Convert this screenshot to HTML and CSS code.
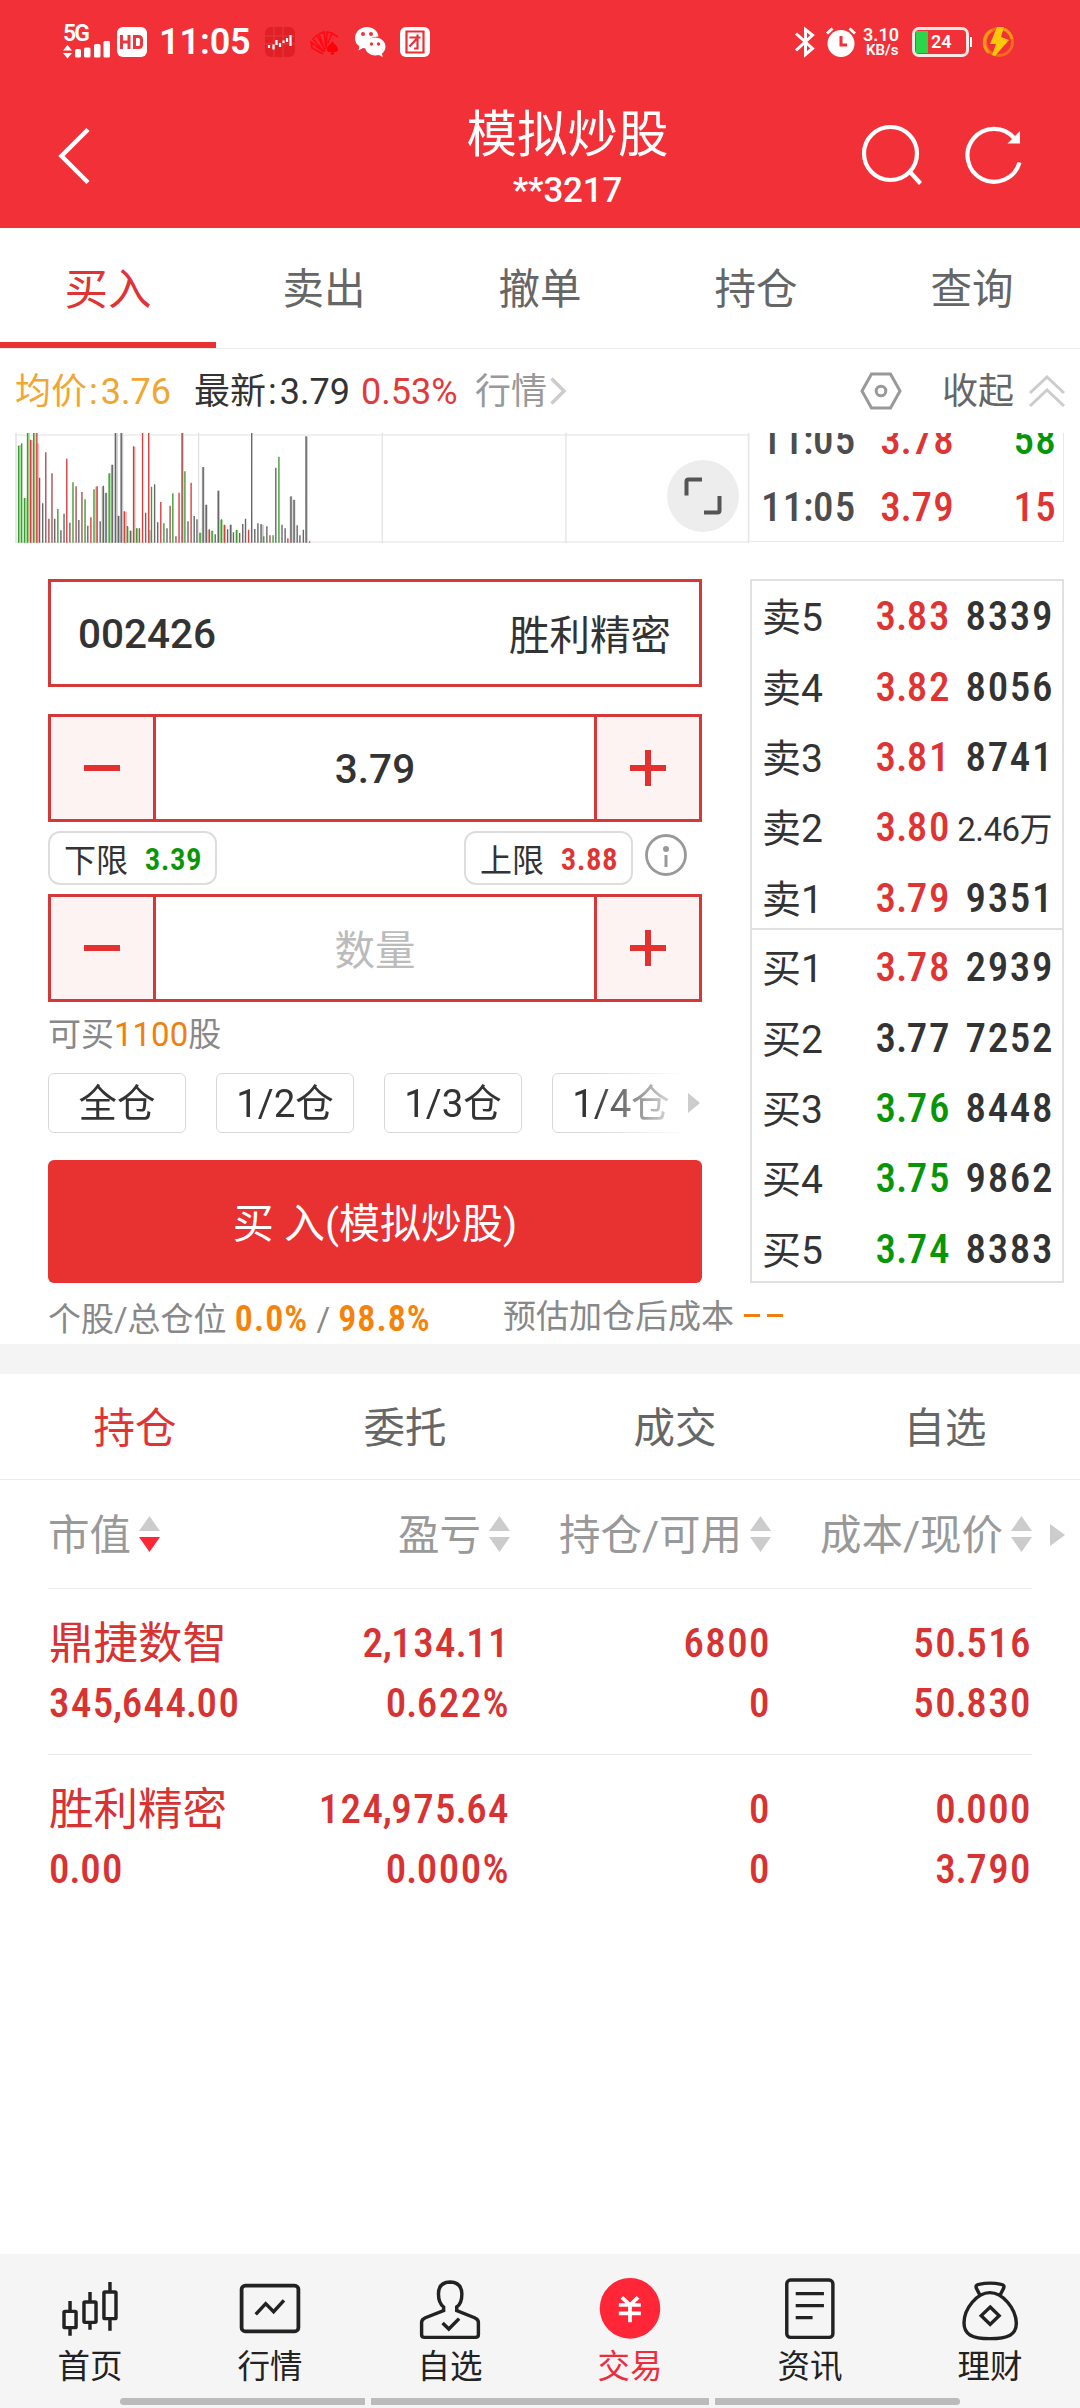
FILE: index.html
```html
<!DOCTYPE html>
<html lang="zh-CN">
<head>
<meta charset="utf-8">
<title>模拟炒股</title>
<link rel="stylesheet" href="styles.css">
</head>
<body>
<header class="header">
  <div class="status">
    <div class="signal">
      <span class="net">5G</span>
      <svg width="48" height="15" viewBox="0 0 48 15" fill="#fff"><path d="M0 6.500L4.500 1L9 6.500zM0 9L4.500 14.500L9 9z"/><rect x="12" y="5" width="6" height="8.500" rx="1.500"/><rect x="21" y="3.500" width="6.500" height="10" rx="1.500"/><rect x="31" y="0" width="6.500" height="13.500" rx="1.500"/><rect x="40.500" y="-3" width="6.500" height="16.500" rx="1.500"/></svg>
    </div>
    <svg class="hd" width="30" height="30" viewBox="0 0 30 30"><rect width="30" height="30" rx="6" fill="#fff"/><path d="M4.500 8v14M12 8v14M4.500 15h7.500M17.500 9.500v11h4q3 0 3-3v-5q0-3-3-3z" fill="none" stroke="#e83840" stroke-width="3"/></svg>
    <span class="clock">11:05</span>
    <svg class="ic-app" width="30" height="30" viewBox="0 0 30 30"><rect width="30" height="30" rx="6" fill="#df2027"/><path d="M0 9h30M0 17h30M9 0v30M18 0v30" stroke="#e8383c"/><path d="M4 18v3M8.500 17.500v5M11.500 13v5M15 16v4M18.500 13.500v2.500M22 11v4M25.500 8v11" stroke="#fff" stroke-width="2.200"/></svg>
    <svg class="ic-fan" width="30" height="30" viewBox="0 0 30 30"><g fill="none" stroke="#ff0a14" stroke-width="1.600"><path d="M13 27L2 21L1 15L14 25L3 12L7 8L15 24L9 7L14 5L16 22L17 5L22 6L18 16M22 6L28 10"/></g><path d="M22.500 14c2 4 6 5 5.500 9c-1 3-4 2-4.500 1.500l1 3h-4l1-3c-1 1-4 1-4.500-1.500c-.5-4 3.500-5 5.500-9z" fill="#ff0008"/></svg>
    <svg class="ic-chat" width="31" height="30" viewBox="0 0 31 30"><path d="M12 0c6 0 11 4 11.500 9.500C16 9.500 10 14 10.500 21.500L8 21l-4.500 2.500l1-4C1.500 17.500 0 14.500 0 11.500C0 5 5 0 12 0z" fill="#fff"/><path d="M20 10.500c6 0 10.500 4 10.500 9c0 3-1.500 5.500-3.500 7l.7 3.500l-3.700-2c-8 2-14-3-14-8.500c0-5 4-9 10-9z" fill="#fff"/><g fill="#f23038"><circle cx="8" cy="7" r="2"/><circle cx="16" cy="7" r="2"/><circle cx="16.500" cy="17" r="1.700"/><circle cx="23.500" cy="17" r="1.700"/></g></svg>
    <svg class="ic-tuan" width="30" height="30" viewBox="0 0 30 30"><rect width="30" height="30" rx="6" fill="#fff"/><path d="M6.500 4.500h17v21h-17zM9.500 10.500h11M17.500 7.500v14h-3.500M16.500 12L9.500 19.500" fill="none" stroke="#e83038" stroke-width="2.200"/></svg>
    <span class="spring"></span>
    <svg class="ic-bt" width="20" height="30" viewBox="0 0 20 30" fill="none" stroke="#fff" stroke-width="3"><path d="M1 6.500L17.500 21.500L10.500 27.500V2.500L17.500 8L1 23.500"/></svg>
    <svg class="ic-alarm" width="30" height="30" viewBox="0 0 30 30"><circle cx="15" cy="16.500" r="13.500" fill="#fff"/><path d="M1 6.500L6.500 1.500M29 6.500L23.500 1.500" stroke="#fff" stroke-width="3"/><path d="M15 9v9h6" fill="none" stroke="#f23038" stroke-width="3"/></svg>
    <div class="speed"><span>3.10</span><span class="unit">KB/s</span></div>
    <div class="battery"><i></i><span>24</span></div>
    <svg class="ic-bolt" width="30" height="30" viewBox="0 0 30 30"><circle cx="15" cy="15" r="13.500" fill="none" stroke="#f46a20" stroke-width="3"/><path d="M5 26A14 14 0 0 1 8 3M20 2A14 14 0 0 1 28 12" stroke="#fb9a12" stroke-width="3" fill="none"/><path d="M13 0h7l-3 10l8 3L11 29L8 28l4-11H6z" fill="#ffc60a"/></svg>
  </div>
  <div class="titlebar">
    <svg class="back" width="34" height="60" viewBox="0 0 34 60" fill="none" stroke="#fff" stroke-width="4.500"><path d="M31 3.500L4.500 30L31 56.500"/></svg>
    <div class="title"><h1>模拟炒股</h1><span>**3217</span></div>
    <div class="actions">
      <svg width="62" height="62" viewBox="0 0 62 62" fill="none" stroke="#fff" stroke-width="4.200"><circle cx="28.500" cy="28.500" r="26.500"/><path d="M48.500 47.500L58.500 58.500"/></svg>
      <svg width="60" height="60" viewBox="0 0 60 60"><path d="M48.500 12.500A26.500 26.500 0 1 0 53.500 36.500" fill="none" stroke="#fff" stroke-width="4.200"/><path d="M54 5v12.500H41.500z" fill="#fff"/></svg>
    </div>
  </div>
</header>

<nav class="tabs">
  <a class="on">买入</a><a>卖出</a><a>撤单</a><a>持仓</a><a>查询</a>
</nav>

<section class="quote">
  <span class="avg">均价<em>:</em>3.76</span>
  <span class="last">最新<em>:</em>3.79</span>
  <span class="pct">0.53%</span>
  <span class="more">行情</span>
  <svg width="16" height="28" viewBox="0 0 16 28" fill="none" stroke="#ccc" stroke-width="3.500"><path d="M1.500 1.500L14 14L1.500 26.500"/></svg>
  <span class="spring"></span>
  <svg class="hex" width="42" height="38" viewBox="0 0 42 38" fill="none" stroke="#999" stroke-width="3"><path d="M11.500 2h19L40 19L30.500 36h-19L2 19z"/><circle cx="21" cy="19" r="4.800"/></svg>
  <span class="fold">收起</span>
  <svg width="36" height="34" viewBox="0 0 36 34" fill="none" stroke="#ccc" stroke-width="3"><path d="M1 19L18 3L35 19M1 32L18 16L35 32"/></svg>
</section>

<section class="market">
  <div class="chart">
    <svg width="735" height="110" viewBox="43.6 609 2134.400 330" preserveAspectRatio="none" fill="none">
      <path d="M45 615H2172M45 936H2172" stroke="#ebebeb" stroke-width="5"/>
      <path d="M46.500 609V939M2174 609V939" stroke="#e6e6e6" stroke-width="5"/>
      <path d="M577 609V939M1110 609V939M1643.500 609V939" stroke="#dcdcdc" stroke-width="3"/>
      <path d="M57 645V938M74 805V938M83 609V938M100 609V938M320 730V938M370 890V938M398 895V938M582 908V938M616 902V938M643 870V938M688 900V938" stroke="#a9e6a0" stroke-width="8"/>
      <path d="M91 630V938M110 640V938M280 770V938M365 845V938M390 650V938M530 609V938M606 900V938M652 886V938" stroke="#f3bcb8" stroke-width="8"/>
      <path d="M299 770V938M308 790V938M326 705V938M338 609V938M345 858V938M354 609V938M380 902V938M436 900V938M590 712V938M599 824V938M635 782V938M670 884V938M762 884V938M845 800V938M854 810V938M890 620V938" stroke="#c9c9c9" stroke-width="8"/>
      <path d="M54 648V938M63 640V938M71 804V938M80 609V938M98 609V938M168 837V938M212 757V938M247 808V938M273 778V938M317 730V938M370 888V938M397 895V938M440 770V938M476 880V938M502 790V938M537 724V938M581 908V938M616 902V938M643 868V938M687 900V938M766 919V938M793 916V938M810 680V938" stroke="#3f9a34" stroke-width="4"/>
      <path d="M89 629V938M107 609V938M194 686V938M264 862V938M282 769V938M361 844V938M414 609V938M432 609V938M467 816V938M520 788V938M555 758V938M608 898V938M652 884V938M722 899V938M836 925V938M899 934V938" stroke="#dc3c3c" stroke-width="4"/>
      <path d="M133 667V938M142 866V938M151 730V938M203 878V938M221 769V938M238 786V938M388 649V938M405 895V938M423 848V938M494 827V938M511 919V938M529 609V938M696 909V938M784 916V938" stroke="#a85050" stroke-width="4"/>
      <path d="M115 743V938M124 820V938M159 866V938M177 901V938M186 851V938M229 870V938M255 887V938M291 874V938M300 767V938M308 788V938M326 704V938M335 609V938M344 857V938M352 609V938M379 902V938M449 763V938M458 877V938M485 895V938M546 874V938M564 858V938M572 868V938M590 711V938M599 824V938M625 913V938M634 782V938M661 898V938M670 884V938M678 907V938M705 882V938M713 866V938M731 609V938M740 897V938M749 880V938M758 882V938M775 889V938M801 713V938M819 884V938M828 895V938M845 799V938M854 809V938M863 886V938M871 916V938M881 899V938M889 619V938" stroke="#666" stroke-width="4"/>
    </svg>
    <span class="expand"><svg width="38" height="38" viewBox="0 0 38 38" fill="none" stroke="#555" stroke-width="4"><path d="M2.500 18.500V4.500q0-2 2-2H18M35.500 19V33.500q0 2-2 2H20"/></svg></span>
  </div>
  <div class="ticks">
    <div class="tick"><span>11<i>:</i>05</span><b class="up">3<i>.</i>78</b><b class="down">58</b></div>
    <div class="tick"><span>11<i>:</i>05</span><b class="up">3<i>.</i>79</b><b class="up">15</b></div>
  </div>
</section>

<section class="trade">
  <div class="form">
    <div class="field code"><b>002426</b><span>胜利精密</span></div>
    <div class="field step price"><i class="minus"></i><b>3.79</b><i class="plus"></i></div>
    <div class="limits">
      <span class="tag">下限<b class="down">3.39</b></span>
      <span class="tag">上限<b class="up">3.88</b></span>
      <svg width="42" height="42" viewBox="0 0 42 42"><circle cx="21" cy="21" r="19.500" fill="none" stroke="#999" stroke-width="2.800"/><circle cx="21" cy="15" r="3" fill="#999"/><path d="M21 21v12" stroke="#999" stroke-width="3"/></svg>
    </div>
    <div class="field step"><i class="minus"></i><span class="hint">数量</span><i class="plus"></i></div>
    <div class="avail">可买<em>1100</em>股</div>
    <div class="chips">
      <div class="chiprow"><span>全仓</span><span>1/2仓</span><span>1/3仓</span><span>1/4仓</span></div>
      <svg width="12" height="20" viewBox="0 0 12 20"><path d="M0 0L12 10L0 20z" fill="#ccc"/></svg>
    </div>
    <button class="buy">买 入(模拟炒股)</button>
  </div>
  <div class="book">
    <div class="sell">
      <div class="lv"><span>卖5</span><b class="up">3<i>.</i>83</b><b>8339</b></div>
      <div class="lv"><span>卖4</span><b class="up">3<i>.</i>82</b><b>8056</b></div>
      <div class="lv"><span>卖3</span><b class="up">3<i>.</i>81</b><b>8741</b></div>
      <div class="lv"><span>卖2</span><b class="up">3<i>.</i>80</b><b class="wan">2.46万</b></div>
      <div class="lv"><span>卖1</span><b class="up">3<i>.</i>79</b><b>9351</b></div>
    </div>
    <div class="bid">
      <div class="lv"><span>买1</span><b class="up">3<i>.</i>78</b><b>2939</b></div>
      <div class="lv"><span>买2</span><b>3<i>.</i>77</b><b>7252</b></div>
      <div class="lv"><span>买3</span><b class="down">3<i>.</i>76</b><b>8448</b></div>
      <div class="lv"><span>买4</span><b class="down">3<i>.</i>75</b><b>9862</b></div>
      <div class="lv"><span>买5</span><b class="down">3<i>.</i>74</b><b>8383</b></div>
    </div>
  </div>
</section>
<div class="ratio">
  <span class="pos">个股/总仓位 <b>0.0%</b> / <b>98.8%</b></span>
  <span class="cost">预估加仓后成本</span><i></i><i></i>
</div>

<nav class="subtabs"><a class="on">持仓</a><a>委托</a><a>成交</a><a>自选</a></nav>

<section class="holdings">
  <div class="thead">
    <span class="c1">市值<svg width="21" height="36" viewBox="0 0 21 36"><path d="M0 15L10.500 0L21 15z" fill="#ccc"/><path d="M0 21L10.500 36L21 21z" fill="#ff2638"/></svg></span>
    <span class="c2">盈亏<svg width="21" height="36" viewBox="0 0 21 36" fill="#ccc"><path d="M0 15L10.500 0L21 15zM0 21L10.500 36L21 21z"/></svg></span>
    <span class="c3">持仓/可用<svg width="21" height="36" viewBox="0 0 21 36" fill="#ccc"><path d="M0 15L10.500 0L21 15zM0 21L10.500 36L21 21z"/></svg></span>
    <span class="c4">成本/现价<svg width="21" height="36" viewBox="0 0 21 36" fill="#ccc"><path d="M0 15L10.500 0L21 15zM0 21L10.500 36L21 21z"/></svg></span>
    <svg class="next" width="15" height="22" viewBox="0 0 15 22"><path d="M0 0L15 11L0 22z" fill="#ccc"/></svg>
  </div>
  <div class="stock">
    <span class="name">鼎捷数智</span><b>2<i>,</i>134<i>.</i>11</b><b>6800</b><b>50<i>.</i>516</b>
    <b>345<i>,</i>644<i>.</i>00</b><b>0<i>.</i>622%</b><b>0</b><b>50<i>.</i>830</b>
  </div>
  <div class="stock">
    <span class="name">胜利精密</span><b>124<i>,</i>975<i>.</i>64</b><b>0</b><b>0<i>.</i>000</b>
    <b>0<i>.</i>00</b><b>0<i>.</i>000%</b><b>0</b><b>3<i>.</i>790</b>
  </div>
</section>

<footer class="dock">
  <div class="items">
    <a><svg width="180" height="70" viewBox="0 100 523 210" preserveAspectRatio="none" fill="none" stroke="#222" stroke-width="10"><rect x="186" y="215" width="35" height="49" rx="3"/><rect x="244" y="187" width="35" height="61" rx="3"/><rect x="302" y="157" width="35" height="80" rx="3"/><path d="M203.500 184v28M203.500 268v20M261.500 157v28M261.500 250v20M319.500 127v28M319.500 240v33"/></svg>首页</a>
    <a><svg width="180" height="70" viewBox="0 100 523 210" preserveAspectRatio="none" fill="none" stroke="#222" stroke-width="11"><rect x="179" y="138" width="165" height="137" rx="11"/><path d="M220 224L249 192L272 216L302 182" stroke-width="10"/></svg>行情</a>
    <a><svg width="180" height="70" viewBox="1045 100 523 210" preserveAspectRatio="none" fill="none" stroke="#222" stroke-width="10"><path d="M1288 202V213L1235 234Q1224 239 1224 248V285Q1224 293 1233 293H1380Q1389 293 1389 285V248Q1389 239 1378 234L1326 213V202Q1341 192 1341 163Q1340 128 1307 127Q1273 128 1273 163Q1273 190 1288 202zM1285 250L1303 268L1333 237"/></svg>自选</a>
    <a class="on"><svg width="180" height="70" viewBox="0 100 523 210" preserveAspectRatio="none"><ellipse cx="261.500" cy="206" rx="88" ry="91" fill="#ff2638"/><path d="M238 173L261.500 196L285 173M229 196H293M229 221H293M261.500 196V248" fill="none" stroke="#fff" stroke-width="11"/></svg>交易</a>
    <a><svg width="180" height="70" viewBox="523 100 523 210" preserveAspectRatio="none" fill="none" stroke="#222" stroke-width="10"><rect x="717" y="121" width="134" height="172" rx="11"/><path d="M743 162H825M743 198H825M743 234H792"/></svg>资讯</a>
    <a><svg width="180" height="70" viewBox="1045 100 523 210" preserveAspectRatio="none" fill="none" stroke="#222" stroke-width="10"><path d="M1277 166L1267 146Q1263 136 1274 134Q1307 127 1339 134Q1350 136 1346 146L1336 166M1306 159C1270 159 1231 205 1231 250C1231 285 1255 297 1306 297C1360 297 1383 285 1383 250C1381 205 1343 159 1306 159zM1307 202L1333 228L1307 254L1281 228z"/></svg>理财</a>
  </div>
  <div class="handles"><i></i><i></i><i></i></div>
</footer>
</body>
</html>
```
FILE: styles.css
```css
* { box-sizing: border-box; }
body {
  margin: 0;
  width: 1080px;
  height: 2408px;
  display: flex;
  flex-direction: column;
  background: #fff;
  color: #333;
  font-family: Roboto, "Noto Sans CJK SC", sans-serif;
  font-weight: 400;
  overflow: hidden;
}
i, em { font-style: normal; }
svg { display: block; flex: none; overflow: visible; }
b { font-weight: 500; }
.spring { flex: 1; }
.up { color: #df3434; }
.down { color: #079607; }

/* header */
.header { height: 228px; background: #f23038; color: #fff; }
.status { height: 84px; display: flex; align-items: center; padding: 0 66px 0 63px; font-weight: 500; }
.signal { width: 48px; height: 34px; display: flex; flex-direction: column; justify-content: space-between; }
.net { font-size: 23px; line-height: 18px; font-weight: 600; letter-spacing: -2px; }
.hd { margin-left: 6px; }
.clock { width: 103px; padding-left: 12px; font-size: 36px; line-height: 42px; font-weight: 600; letter-spacing: -.1px; white-space: nowrap; }
.ic-app { margin-left: 15px; }
.ic-fan { margin-left: 15px; }
.ic-chat { margin-left: 15px; }
.ic-tuan { margin-left: 14px; }
.ic-alarm { margin-left: 11px; }
.speed { width: 37px; margin-left: 7px; display: flex; flex-direction: column; font-size: 18px; line-height: 15px; font-weight: 600; }
.speed .unit { font-size: 15px; padding-left: 3px; margin-top: 1px; }
.battery { position: relative; width: 57px; height: 30px; margin-left: 12px; border: 3px solid #fde8e8; border-radius: 7px; font-size: 18px; line-height: 24px; font-weight: 600; }
.battery i { position: absolute; left: 1px; top: 1px; width: 12px; height: 22px; background: #2bd74a; }
.battery span { position: absolute; left: 16px; }
.battery::after { content: ""; position: absolute; right: -6px; top: 7px; width: 2px; height: 10px; background: #fff; }
.ic-bolt { margin-left: 15px; }
.titlebar { height: 144px; display: grid; grid-template-columns: 281px 573px 226px; align-items: center; }
.back { margin-left: 57px; }
.title { display: flex; flex-direction: column; align-items: center; }
.title h1 { margin: 4px 0 0; font-size: 50.500px; line-height: 60px; font-weight: 400; }
.title span { font-size: 35px; line-height: 40px; font-weight: 500; margin-top: 6px; letter-spacing: -.2px; }
.actions { display: flex; gap: 42px; padding-left: 8px; align-items: center; }

/* tabs */
.tabs { height: 121px; display: flex; border-bottom: 1px solid #ebebeb; }
.tabs a { width: 216px; display: flex; align-items: center; justify-content: center; font-size: 41.500px; color: #666; padding-bottom: 4px; }
.tabs .on { font-size: 43.500px; color: #e03434; border-bottom: 6px solid #e83131; padding: 3px 0 0; }

/* quote line */
.quote { height: 84px; display: flex; align-items: center; padding: 0 15px; font-size: 36px; line-height: 42px; white-space: nowrap; }
.quote span { padding-top: 1px; }
.quote em { margin: 0 3px 0 2px; }
.avg { width: 179px; color: #f0a630; }
.last { width: 167px; }
.pct { width: 114px; color: #e03a3a; }
.more { width: 75px; color: #999; }
.fold { color: #666; margin: 0 15px 0 40px; }

/* volume chart and ticks */
.market { height: 110px; display: flex; padding-left: 15px; }
.chart { position: relative; width: 735px; }
.expand { position: absolute; right: 11px; top: 27px; width: 72px; height: 72px; border-radius: 50%; background: #ededed; display: flex; align-items: center; justify-content: center; }
.ticks { width: 314px; height: 109px; border: solid #e8e8e8; border-width: 0 1px 1px 0; overflow: hidden; display: flex; flex-direction: column; justify-content: flex-end; }
.tick { flex: none; height: 67px; padding: 0 6px 1px 11px; display: grid; grid-template-columns: 93px 101px 1fr; align-items: center; font-size: 41px; font-weight: 500; font-stretch: 75%; letter-spacing: 1.300px; text-align: right; }
.tick span { color: #4d4d4d; text-align: left; }

/* punctuation inside figures is set tighter than the digits */
.tick i, .lv i, .stock i { letter-spacing: -.6px; margin-left: -1.600px; }

/* order form */
.trade { height: 740px; padding: 36px 16px 0 48px; display: flex; justify-content: space-between; }
.form { width: 654px; }
.field { height: 108px; border: 3px solid #d63838; display: flex; align-items: center; justify-content: space-between; font-size: 40.500px; }
.field b { padding-top: 2px; }
.field span { padding-bottom: 2px; }
.code { padding: 0 28px 0 27px; }
.price { margin-top: 27px; }
.minus, .plus { width: 105px; height: 102px; background: linear-gradient(#e53030, #e53030) center / 36px 6px no-repeat #fef3f3; }
.minus { border-right: 3px solid #d63838; }
.plus { border-left: 3px solid #d63838; background: linear-gradient(#e53030, #e53030) center / 36px 6px no-repeat, linear-gradient(#e53030, #e53030) center / 6px 36px no-repeat, #fef3f3; }
.hint { color: #bbb; }
.limits { height: 72px; display: flex; align-items: center; padding-right: 15px; }
.limits svg { margin-top: -6px; }
.tag { width: 169px; height: 54px; border: 2px solid #ddd; border-radius: 12px; display: flex; align-items: center; justify-content: space-between; padding: 0 13px 0 14px; font-size: 32px; }
.tag b { font-size: 31px; font-weight: 600; font-stretch: 75%; letter-spacing: .4px; padding-top: 2px; }
.tag + .tag { margin: 0 12px 0 247px; }
.avail { height: 71px; line-height: 66px; font-size: 33px; color: #888; }
.avail em { color: #ef800f; }
.chips { display: flex; align-items: center; height: 60px; }
.chiprow { width: 640px; display: flex; gap: 30px; overflow: hidden; -webkit-mask: linear-gradient(90deg, #000 545px, transparent 640px); mask: linear-gradient(90deg, #000 545px, transparent 640px); }
.chiprow span { flex: none; width: 138px; height: 60px; border: 1px solid #d8d8d8; border-radius: 6px; font-size: 38.500px; line-height: 60px; text-align: center; }
.buy { display: block; width: 654px; height: 123px; margin-top: 27px; padding: 0 0 4px; border: 0; border-radius: 6px; background: #e83131; color: #fff; font: inherit; font-size: 41px; }

/* five-level book */
.book { width: 314px; height: 704px; border: 2px solid #e0e0e0; font-size: 41px; }
.sell { height: 349px; border-bottom: 2px solid #e0e0e0; }
.bid { padding-top: 2px; }
.lv { height: 70.400px; display: grid; grid-template-columns: 82px 104px 1fr; align-items: center; padding: 0 8px 0 13px; text-align: right; font-stretch: 75%; letter-spacing: 1.600px; }
.lv span { text-align: left; font-size: 39px; font-weight: 400; font-stretch: 100%; letter-spacing: 0; padding-bottom: 4px; margin-left: -3px; }
.lv .wan { font-size: 33px; font-weight: 400; font-stretch: 100%; letter-spacing: -.5px; white-space: nowrap; margin: 0 2px 0 -12px; }

.ratio { flex: none; margin-top: -36px; height: 97px; padding: 48px 0 0 48px; display: flex; align-items: center; font-size: 33px; line-height: 40px; color: #888; white-space: nowrap; }
.ratio b { color: #f5820a; font-size: 36px; line-height: 36px; font-weight: 600; font-stretch: 75%; letter-spacing: 1px; }
.pos { width: 455px; }
.cost { width: 241px; margin-top: -5px; }
.ratio i { width: 16px; height: 3px; margin: -8px 7px 0 0; background: #ef800f; }

/* holdings */
.subtabs { height: 136px; flex: none; display: flex; border-top: 30px solid #f4f4f4; border-bottom: 1px solid #ebebeb; }
.subtabs a { width: 270px; text-align: center; font-size: 41.500px; line-height: 109px; color: #666; }
.subtabs .on { color: #e03434; }
.holdings { padding-left: 48px; }
.thead { height: 109px; width: 1017px; display: grid; grid-template-columns: 200px 262px 261px 261px 1fr; align-items: center; font-size: 41.500px; color: #999; background: linear-gradient(#ebebeb, #ebebeb) left bottom / 984px 1px no-repeat; }
.thead span { display: flex; align-items: center; justify-content: flex-end; gap: 8px; white-space: nowrap; padding-bottom: 5px; }
.thead span svg { margin-top: 4px; }
.thead .c1 { justify-content: flex-start; }
.next { justify-self: end; }
.stock { width: 984px; height: 166px; padding: 23px 0 0 1px; border-bottom: 1px solid #ebebeb; display: grid; grid-template-columns: 200px 261px 261px 1fr; grid-template-rows: 60px 60px; align-items: center; text-align: right; color: #d83232; font-size: 41px; font-stretch: 75%; letter-spacing: 1.400px; white-space: nowrap; }
.stock:last-child { border: 0; }
.stock > :nth-child(4n+1) { text-align: left; }
.stock b { padding-top: 1px; }
.name { font-size: 44.500px; font-stretch: 100%; letter-spacing: 0; padding-bottom: 5px; }

/* bottom navigation */
.dock { margin-top: auto; height: 154px; background: #f5f5f5; }
.items { display: flex; height: 144px; padding-top: 19px; }
.items a { width: 180px; text-align: center; font-size: 32.500px; line-height: 48px; color: #222; }
.items .on { color: #f02c3c; }
.handles { display: grid; grid-template-columns: 245px 338px 245px; gap: 6px; padding-left: 120px; }
.handles i { height: 7px; background: #bbb; }
.handles i:first-child { border-radius: 4px 0 0 4px; }
.handles i:last-child { border-radius: 0 4px 4px 0; }
```
